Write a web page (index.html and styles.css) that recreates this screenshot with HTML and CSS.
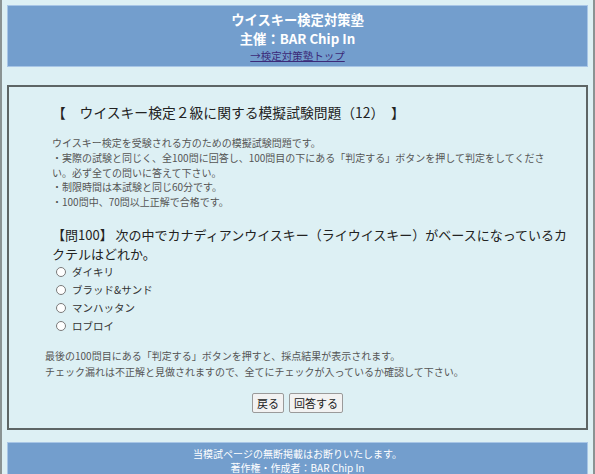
FILE: index.html
```html
<!DOCTYPE html>
<html lang="ja">
<head>
<meta charset="utf-8">
<title>ウイスキー検定対策塾</title>
<link rel="stylesheet" href="styles.css">
</head>
<body>
<div class="frame">
  <header class="site-header">
    <div class="site-title">ウイスキー検定対策塾</div>
    <div class="site-title">主催：BAR Chip In</div>
    <div class="site-link"><a href="#">→検定対策塾トップ</a></div>
  </header>

  <main class="exam">
    <div class="quiz">
      <h1 class="exam-title">【　ウイスキー検定２級に関する模擬試験問題（12）　】</h1>
      <p class="intro">ウイスキー検定を受験される方のための模擬試験問題です。<br>・実際の試験と同じく、全100問に回答し、100問目の下にある「判定する」ボタンを押して判定をしてくださ<br>い。必ず全ての問いに答えて下さい。<br>・制限時間は本試験と同じ60分です。<br>・100問中、70問以上正解で合格です。</p>
      <p class="question">【問100】 次の中でカナディアンウイスキー（ライウイスキー）がベースになっているカ<br>クテルはどれか。</p>
      <ul class="choices">
        <li><label><input type="radio" name="q100"><span>ダイキリ</span></label></li>
        <li><label><input type="radio" name="q100"><span>ブラッド&amp;サンド</span></label></li>
        <li><label><input type="radio" name="q100"><span>マンハッタン</span></label></li>
        <li><label><input type="radio" name="q100"><span>ロブロイ</span></label></li>
      </ul>
    </div>
    <p class="note">最後の100問目にある「判定する」ボタンを押すと、採点結果が表示されます。<br>チェック漏れは不正解と見做されますので、全てにチェックが入っているか確認して下さい。</p>
    <div class="actions">
      <button type="button" class="btn">戻る</button>
      <button type="button" class="btn">回答する</button>
    </div>
  </main>

  <footer class="site-footer">
    <div>当模試ページの無断掲載はお断りいたします。</div>
    <div>著作権・作成者：BAR Chip In</div>
  </footer>
</div>
</body>
</html>
```

FILE: styles.css
```css
* { box-sizing: border-box; }

html, body {
  margin: 0;
  padding: 0;
  background: #ddf0f4;
}

body {
  font-family: "Noto Sans CJK JP", "Noto Sans", sans-serif;
  color: #333;
}

.frame {
  min-height: 474px;
  border-left: 2px solid #8a9393;
  border-right: 2px solid #8a9393;
  padding: 5px 5px 0;
}

.site-header {
  background: #739ecd;
  border: 1px solid #a8c6e6;
  padding: 4px 0 2px;
  text-align: center;
  color: #fff;
}

.site-title {
  font-size: 13.3px;
  font-weight: bold;
  line-height: 19px;
}

.site-link {
  font-size: 10.5px;
  line-height: 16px;
}

.site-link a {
  color: #3b2a78;
  text-decoration: underline;
}

.exam {
  margin-top: 18px;
  border: 2px solid #5d6565;
  padding: 15px 36px 15px;
}

.quiz {
  padding-left: 7px;
}

.exam-title {
  margin: 0;
  font-size: 13.8px;
  font-weight: normal;
  line-height: 20px;
  color: #222;
}

.intro {
  margin: 14px 0 0;
  font-size: 10px;
  line-height: 14.8px;
  color: #555;
}

.question {
  margin: 15px 0 0;
  font-size: 13px;
  line-height: 19px;
  color: #222;
  white-space: nowrap;
}

.choices {
  list-style: none;
  margin: 0;
  padding: 0;
}

.choices li {
  height: 18px;
  display: flex;
  align-items: center;
}

.choices label {
  display: flex;
  align-items: center;
  font-size: 10.5px;
  color: #333;
}

.choices input {
  appearance: none;
  -webkit-appearance: none;
  width: 10px;
  height: 10px;
  margin: 0 6px 0 4px;
  border: 1px solid #7a7a7a;
  border-radius: 50%;
  background: #fff;
}

.note {
  margin: 13px 0 0;
  font-size: 10px;
  line-height: 16px;
  color: #555;
}

.actions {
  margin-top: 13px;
  display: flex;
  justify-content: center;
  gap: 5px;
}

.btn {
  font-family: inherit;
  font-size: 11px;
  height: 20px;
  line-height: 18px;
  padding: 0 4px;
  color: #222;
  background: #f2f2f2;
  border: 1px solid #9a9a9a;
  border-radius: 2px;
}

.site-footer {
  margin-top: 12px;
  background: #739ecd;
  border: 1px solid #a8c6e6;
  border-bottom: none;
  padding: 4px 0 6px;
  text-align: center;
  color: #fff;
  font-size: 10px;
  line-height: 14px;
}
```
